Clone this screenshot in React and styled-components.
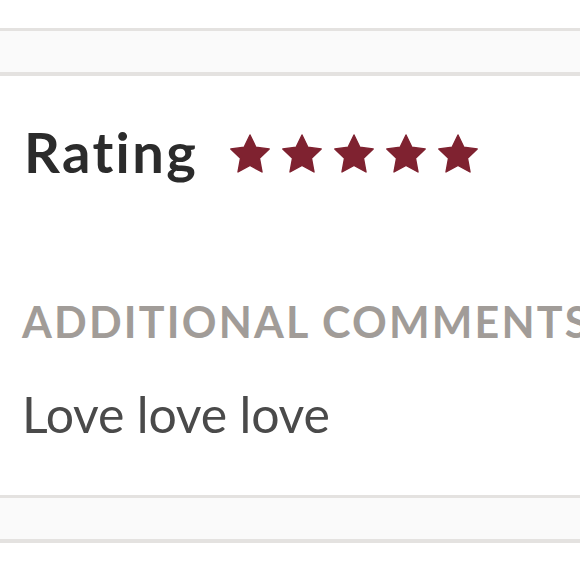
import React from "react"
import styled, { createGlobalStyle } from "styled-components"

const Global = createGlobalStyle`
  body {
    margin: 0;
    background: #fff;
    font-family: Lato, "Liberation Sans", sans-serif;
    font-variant-ligatures: none;
  }
`

const Page = styled.div`
  width: 580px;
  height: 580px;
  overflow: hidden;
  padding-top: 28px;
  box-sizing: border-box;
`

// grey strip between cards
const Band = styled.div`
  height: 41px;
  background-color: #fafafa;
  border-top: 3px solid #e4e2e0;
  border-bottom: 4px solid #e4e2e0;
`

const Card = styled.div`
  background-color: #fff;
  height: 419px;
  box-sizing: border-box;
  padding: 43px 0 0 22px;
  white-space: nowrap;
`

const RatingRow = styled.div`
  display: flex;
  align-items: center;
  gap: 32px;
  padding-left: 2px;
`

const Title = styled.h2`
  margin: 0;
  font-size: 56px;
  line-height: 66px;
  font-weight: 700;
  letter-spacing: 2.4px;
  color: #2b2b2b;
`

const Stars = styled.div`
  display: flex;
  gap: 12px;
  padding-top: 2px;
`

const Label = styled.div`
  margin-top: 111px;
  font-size: 43px;
  line-height: 52px;
  font-weight: 700;
  letter-spacing: 2.2px;
  color: #a19c98;
  text-transform: uppercase;
`

const Comment = styled.p`
  margin: 36px 0 0;
  font-size: 50px;
  line-height: 60px;
  font-weight: 400;
  letter-spacing: -0.2px;
  color: #4a4a4a;
`

const Star = () => (
  <svg width="40" height="39" viewBox="0 0 40 39">
    <polygon
      fill="#7f2230"
      stroke="#7f2230"
      strokeWidth="1.4"
      strokeLinejoin="round"
      points="20,1 25.9,13.2 39.2,14.9 29.5,24.3 32,38 20,31.4 8,38 10.5,24.3 0.8,14.9 14.1,13.2"
    />
  </svg>
)

export default function App() {
  return (
    <>
      <Global />
      <Page>
        <Band />
        <Card>
          <RatingRow>
            <Title>Rating</Title>
            <Stars>
              {[0, 1, 2, 3, 4].map(i => <Star key={i} />)}
            </Stars>
          </RatingRow>
          <Label>Additional Comments</Label>
          <Comment>Love love love</Comment>
        </Card>
        <Band />
      </Page>
    </>
  )
}
